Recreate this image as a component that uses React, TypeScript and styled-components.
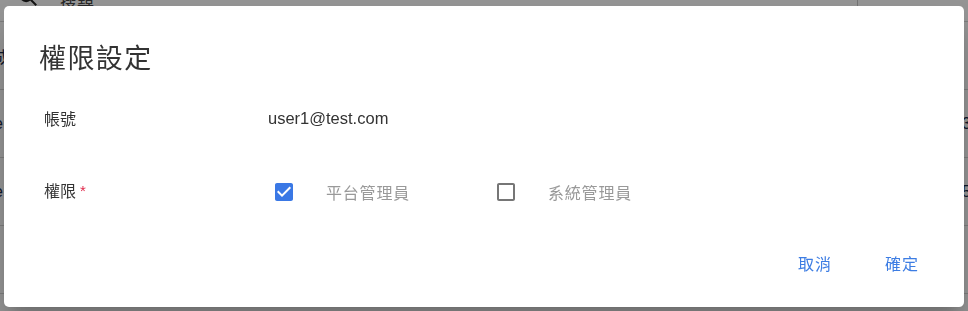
import React from "react";
import styled, { createGlobalStyle } from "styled-components";

const Global = createGlobalStyle`
  html, body { margin: 0; padding: 0; background: #fff; }
  body { font-family: "Liberation Sans", "Noto Sans CJK TC", sans-serif; overflow: hidden; }
  * { box-sizing: border-box; }
`;

const CJK = `"Liberation Sans", "Noto Sans CJK TC", sans-serif`;

/* ---------- background page ---------- */
const Page = styled.div`
  width: 968px;
  height: 311px;
  display: flex;
  flex-direction: column;
  background: #fff;
  overflow: hidden;
`;

const SearchBar = styled.div`
  height: 22px;
  display: flex;
  align-items: flex-end;
  border-bottom: 1px solid #d6d6d6;
`;

const SearchIcon = styled.div`
  width: 56px;
  display: flex;
  justify-content: center;
  margin-top: -14px;
  align-self: flex-start;
  color: #222;
`;

const SearchText = styled.div`
  flex: 1;
  align-self: flex-start;
  margin-top: -12px;
  padding-left: 4px;
  font-family: ${CJK};
  font-size: 17px;
  color: #444;
`;

const SearchSide = styled.div`
  width: 111px;
  height: 8px;
  align-self: flex-start;
  border-left: 1px solid #c8c8c8;
`;

const TableRow = styled.div`
  height: 68px;
  display: flex;
  align-items: center;
  justify-content: space-between;
  border-bottom: 1px solid #d6d6d6;
  font-family: ${CJK};
  font-size: 16px;
  color: #1a2a4a;
`;

const Edge = styled.span<{ $side: "l" | "r" }>`
  ${(p) => (p.$side === "l" ? "margin-left: -6px;" : "margin-right: -3px;")}
`;

/* ---------- dialog ---------- */
const Backdrop = styled.div`
  position: fixed;
  inset: 0;
  background: rgba(0, 0, 0, 0.42);
  display: flex;
  align-items: center;
  justify-content: center;
  padding: 6px 4px 4px 4px;
`;

const Dialog = styled.div`
  width: 960px;
  height: 301px;
  background: #fff;
  border-radius: 5px;
  box-shadow: 0 11px 15px -7px rgba(0,0,0,.2), 0 24px 38px 3px rgba(0,0,0,.14);
  display: flex;
  flex-direction: column;
  padding: 36px 29px 26px 32px;
`;

const Title = styled.h2`
  margin: 0 0 0 3px;
  font-family: ${CJK};
  font-weight: 400;
  font-size: 27px;
  line-height: 35px;
  color: #333;
  letter-spacing: 1.4px;
`;

const Form = styled.div`
  display: flex;
  flex-direction: column;
  gap: 32px;
  margin-top: 21px;
`;

const Row = styled.div`
  display: grid;
  grid-template-columns: 224px 1fr;
  align-items: center;
  height: 40px;
  padding-left: 8px;
`;

const Label = styled.div`
  font-family: ${CJK};
  font-size: 16px;
  color: #333;
  display: flex;
  align-items: center;
  gap: 4px;
`;

const Required = styled.span`
  color: #e0284a;
  font-size: 15px;
`;

const Value = styled.div`
  font-family: "Liberation Sans", Arial, sans-serif;
  font-size: 16.5px;
  color: #333;
`;

const Options = styled.div`
  display: flex;
  align-items: center;
  gap: 84px;
  margin-left: 4px;
`;

const Option = styled.label`
  display: flex;
  align-items: center;
  gap: 30px;
  font-family: ${CJK};
  font-size: 16px;
  letter-spacing: 0.8px;
  color: #999;
  cursor: pointer;
  margin-top: 3px;
`;

const Box = styled.span<{ $checked: boolean }>`
  display: flex;
  width: 24px;
  height: 24px;
  color: ${(p) => (p.$checked ? "#3a78e5" : "#767676")};
`;

const Actions = styled.div`
  margin-top: auto;
  display: flex;
  justify-content: flex-end;
  gap: 21px;
`;

const Button = styled.button`
  height: 36px;
  padding: 0 16px;
  border: none;
  background: transparent;
  font-family: ${CJK};
  font-size: 16px;
  letter-spacing: 1px;
  color: #3d7de3;
  cursor: pointer;
  border-radius: 4px;
`;

const CheckIcon = ({ checked }: { checked: boolean }) => (
  <Box $checked={checked}>
    <svg width="24" height="24" viewBox="0 0 24 24" fill="currentColor">
      {checked ? (
        <path d="M19 3H5c-1.11 0-2 .9-2 2v14c0 1.1.89 2 2 2h14c1.11 0 2-.9 2-2V5c0-1.1-.89-2-2-2zm-9 14l-5-5 1.41-1.41L10 14.17l7.59-7.59L19 8l-9 9z" />
      ) : (
        <path d="M19 5v14H5V5h14m0-2H5c-1.1 0-2 .9-2 2v14c0 1.1.9 2 2 2h14c1.1 0 2-.9 2-2V5c0-1.1-.9-2-2-2z" />
      )}
    </svg>
  </Box>
);

export default function App() {
  const options = [
    { label: "平台管理員", checked: true },
    { label: "系統管理員", checked: false },
  ];
  return (
    <>
      <Global />
      <Page>
        <SearchBar>
          <SearchIcon>
            <svg width="22" height="22" viewBox="0 0 24 24" fill="none" stroke="currentColor" strokeWidth="2.2">
              <circle cx="10" cy="10" r="6.5" />
              <path d="M15 15l6 6" />
            </svg>
          </SearchIcon>
          <SearchText>搜尋</SearchText>
          <SearchSide />
        </SearchBar>
        <TableRow>
          <Edge $side="l">成</Edge>
          <Edge $side="r"> </Edge>
        </TableRow>
        <TableRow>
          <Edge $side="l">e</Edge>
          <Edge $side="r">3</Edge>
        </TableRow>
        <TableRow>
          <Edge $side="l">e</Edge>
          <Edge $side="r">5</Edge>
        </TableRow>
        <TableRow />
      </Page>
      <Backdrop>
        <Dialog role="dialog">
          <Title>權限設定</Title>
          <Form>
            <Row>
              <Label>帳號</Label>
              <Value>user1@test.com</Value>
            </Row>
            <Row>
              <Label>
                權限<Required>*</Required>
              </Label>
              <Options>
                {options.map((o) => (
                  <Option key={o.label}>
                    <CheckIcon checked={o.checked} />
                    {o.label}
                  </Option>
                ))}
              </Options>
            </Row>
          </Form>
          <Actions>
            <Button>取消</Button>
            <Button>確定</Button>
          </Actions>
        </Dialog>
      </Backdrop>
    </>
  );
}
